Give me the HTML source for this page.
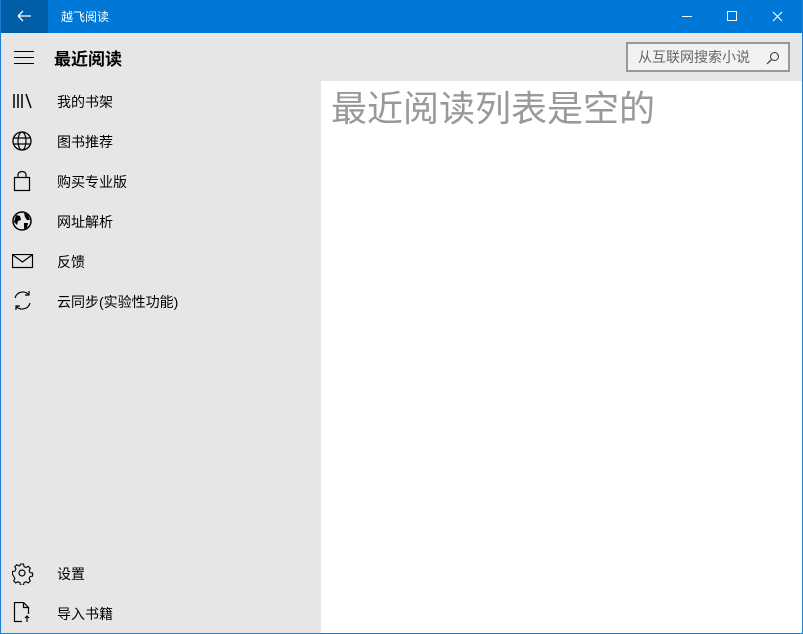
<!DOCTYPE html>
<html><head><meta charset="utf-8"><style>
*{margin:0;padding:0;box-sizing:border-box}
body{width:803px;height:634px;overflow:hidden;background:#e6e6e6;font-family:"Liberation Sans","Noto Sans CJK SC",sans-serif;position:relative}
.win{position:absolute;left:0;top:0;width:803px;height:634px;border:1px solid #1a7fd4;border-top:none}
.title{position:absolute;left:0;top:0;width:803px;height:33px;background:#0078d7;color:#fff}
.back{position:absolute;left:0;top:0;width:48px;height:33px;background:#005ea8}
.t{position:absolute;font-size:12px;color:#fff;left:61px;top:8px}
.main{position:absolute;left:321px;top:81px;width:481px;height:552px;background:#fff}
.h{position:absolute;left:331px;top:80px;font-size:36px;color:#999;letter-spacing:0}
.item{position:absolute;left:57px;font-size:14px;color:#000}
.ic{position:absolute;left:12px}
.search{position:absolute;left:626px;top:42px;width:164px;height:30px;border:2px solid #999;background:#f2f2f2;font-size:14px;color:#666;padding:3px 0 0 10px}
</style></head><body>
<div class="title">
<div class="back"><svg width="48" height="33"><path d="M18 16h13M18 16l5-5M18 16l5 5" stroke="#fff" stroke-width="1.3" fill="none"/></svg></div>
<div class="t">越飞阅读</div>
<svg style="position:absolute;left:660px;top:0" width="143" height="33">
<path d="M22 16.5h10" stroke="#fff" stroke-width="1"/>
<rect x="67.5" y="11.5" width="9" height="9" stroke="#fff" fill="none"/>
<path d="M113 12l9 9M122 12l-9 9" stroke="#fff" stroke-width="1.1"/>
</svg>
</div>
<svg style="position:absolute;left:14px;top:49px" width="22" height="16"><path d="M0 2.5h20M0 8.5h20M0 14.5h20" stroke="#000" stroke-width="1.1"/></svg>
<div style="position:absolute;left:54px;top:45px;font-size:17px;font-weight:bold">最近阅读</div>
<div class="search">从互联网搜索小说<svg style="position:absolute;right:8px;top:7px" width="14" height="14"><circle cx="8.5" cy="5.5" r="4" stroke="#333" fill="none"/><path d="M5.5 8.5L1 13" stroke="#333" stroke-width="1.2"/></svg></div>
<div class="main"></div>
<div class="h">最近阅读列表是空的</div>

<svg class="ic" style="top:92px" width="22" height="18"><path d="M2 2v14M6 2v14M10 2v14M14 2l5 14" stroke="#000" stroke-width="1.5" fill="none"/></svg>
<div class="item" style="top:92px">我的书架</div>
<svg class="ic" style="top:131px" width="22" height="20"><circle cx="10" cy="10" r="9" stroke="#000" fill="none" stroke-width="1.3"/><ellipse cx="10" cy="10" rx="4" ry="9" stroke="#000" fill="none" stroke-width="1.2"/><path d="M1 7h18M1 13h18" stroke="#000" stroke-width="1.2"/></svg>
<div class="item" style="top:132px">图书推荐</div>
<svg class="ic" style="top:171px" width="22" height="22"><rect x="2.5" y="6.5" width="15" height="13" stroke="#000" fill="none" stroke-width="1.2"/><path d="M6 6V3.5a4 3 0 0 1 8 0V6" stroke="#000" fill="none" stroke-width="1.2"/></svg>
<div class="item" style="top:172px">购买专业版</div>
<svg class="ic" style="top:211px" width="22" height="20"><circle cx="10" cy="10" r="9" stroke="#000" fill="none" stroke-width="1.5"/><path d="M4 4l4 1 1 4-3 1-1 4-3-3zM12 2l4 2 2 5-3 0-2-3zM12 12l4 0-1 5-3 1z" fill="#000"/></svg>
<div class="item" style="top:212px">网址解析</div>
<svg class="ic" style="top:254px" width="22" height="16"><rect x="0.5" y="0.5" width="20" height="13" stroke="#000" fill="none" stroke-width="1.2"/><path d="M1 1l9.5 7 9.5-7" stroke="#000" fill="none" stroke-width="1.2"/></svg>
<div class="item" style="top:252px">反馈</div>
<svg class="ic" style="top:290px" width="22" height="22"><path d="M3 8a8 8 0 0 1 14-3M18 13a8 8 0 0 1-14 3" stroke="#000" fill="none" stroke-width="1.2"/><path d="M17 1v4h-4M4 20v-4h4" stroke="#000" fill="none" stroke-width="1.2"/></svg>
<div class="item" style="top:292px">云同步(实验性功能)</div>
<svg class="ic" style="top:563px" width="22" height="22"><circle cx="10" cy="10" r="3" stroke="#000" fill="none" stroke-width="1.2"/><path d="M8.5 1h3l.5 2.5 2 1 2.3-1.2 2 2-1.2 2.3 1 2 2.5.5v3l-2.5.5-1 2 1.2 2.3-2 2-2.3-1.2-2 1-.5 2.5h-3l-.5-2.5-2-1-2.3 1.2-2-2 1.2-2.3-1-2L.5 11.5v-3L3 8l1-2-1.2-2.3 2-2L7 3l1-.5z" stroke="#000" fill="none" stroke-width="1.1"/></svg>
<div class="item" style="top:564px">设置</div>
<svg class="ic" style="top:602px" width="22" height="22"><path d="M10 19.5H2.5V.5h9l5 5V12M11.5 .5v5h5" stroke="#000" fill="none" stroke-width="1.2"/><path d="M15 20v-6M13 16l2-2 2 2" stroke="#000" fill="none" stroke-width="1.2"/></svg>
<div class="item" style="top:604px">导入书籍</div>
<div class="win"></div>
</body></html>
